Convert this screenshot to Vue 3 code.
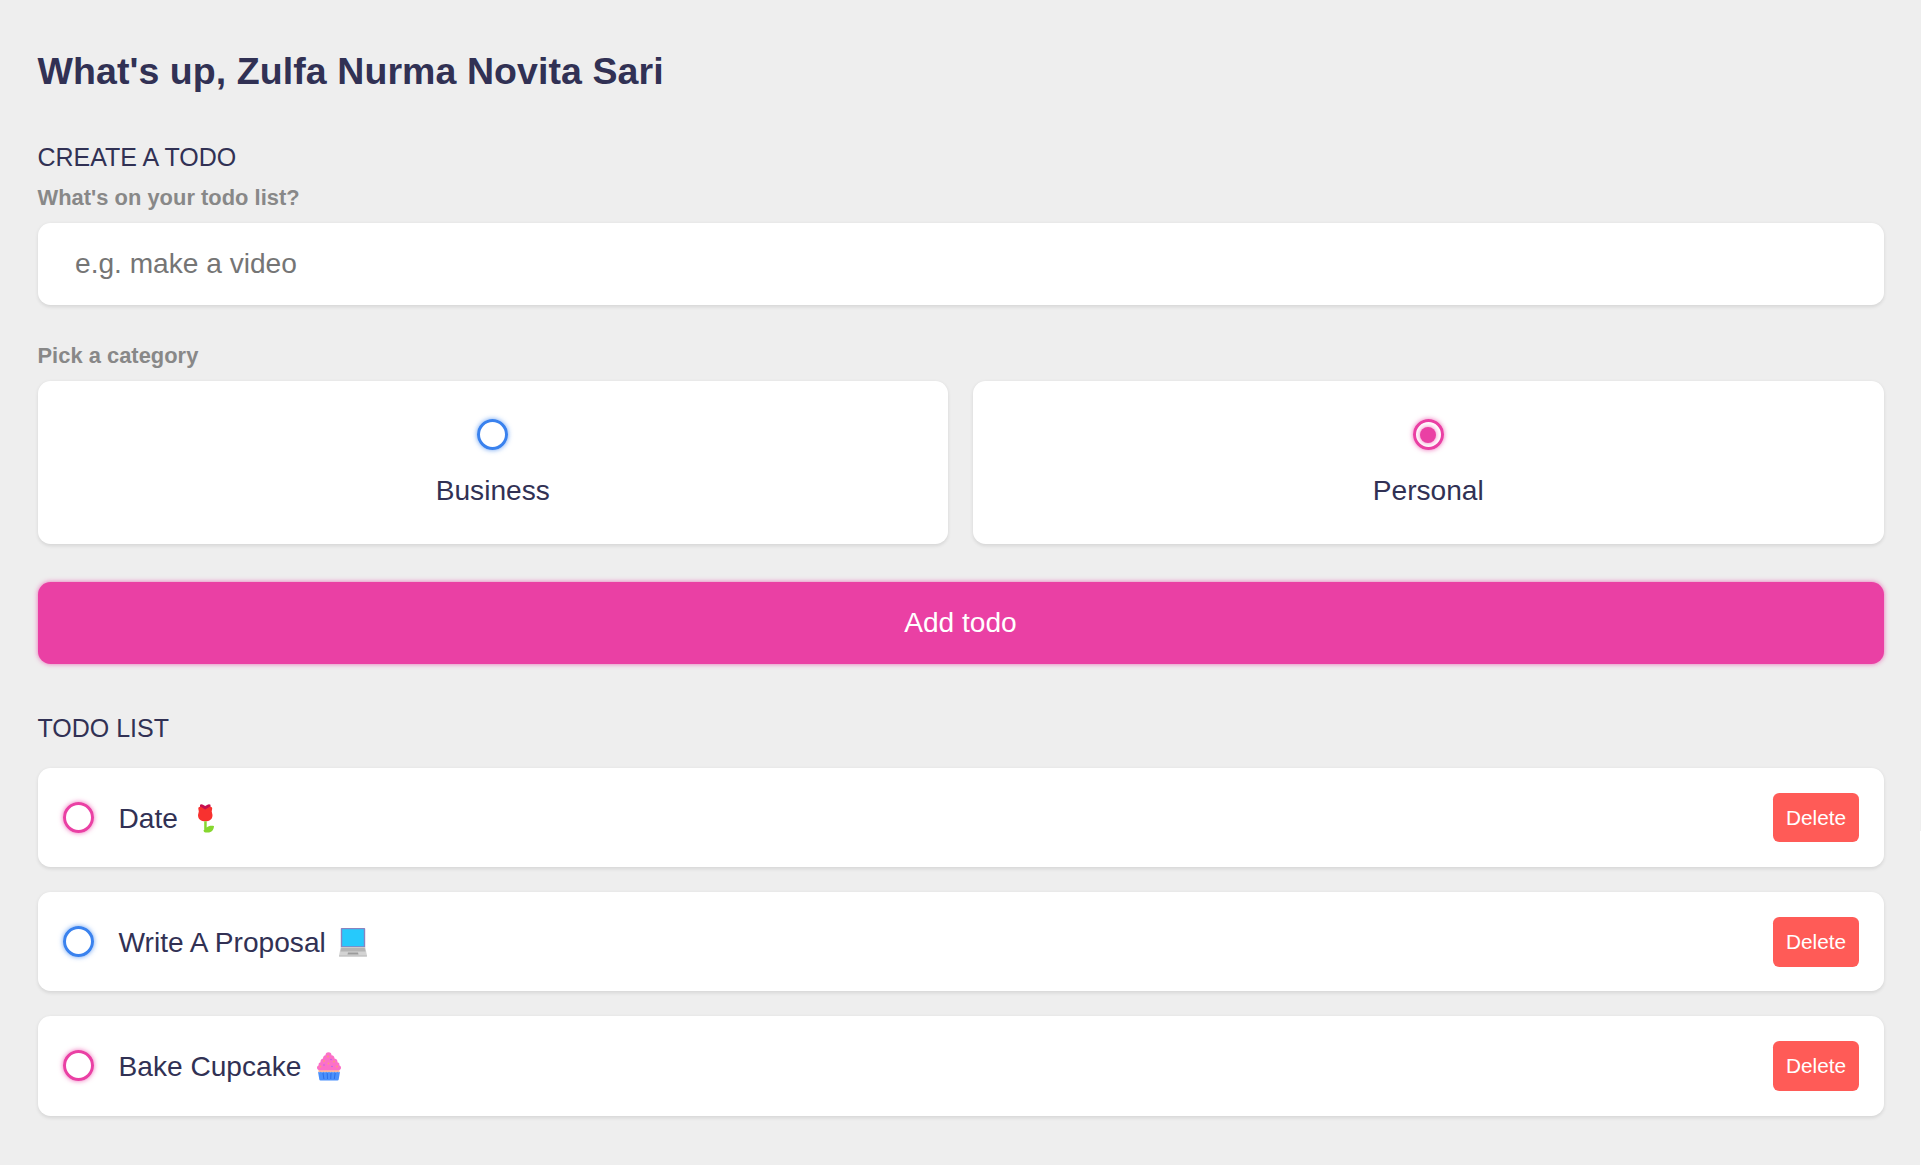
<script setup>
import { ref } from 'vue'

const name = ref('Zulfa Nurma Novita Sari')
const content = ref('')
const category = ref('personal')
const todos = ref([
  { id: 1, text: 'Date', icon: 'rose', category: 'personal' },
  { id: 2, text: 'Write A Proposal', icon: 'laptop', category: 'business' },
  { id: 3, text: 'Bake Cupcake', icon: 'cupcake', category: 'personal' },
])

function addTodo() {
  if (!content.value.trim()) return
  todos.value.push({ id: Date.now(), text: content.value, icon: '', category: category.value })
  content.value = ''
}

function removeTodo(id) {
  todos.value = todos.value.filter((t) => t.id !== id)
}
</script>

<template>
  <main class="app">
    <section class="greeting">
      <h2 class="title">What's up, <span>{{ name }}</span></h2>
    </section>

    <section class="create">
      <h3>CREATE A TODO</h3>
      <form @submit.prevent="addTodo">
        <h4>What's on your todo list?</h4>
        <input v-model="content" class="field" type="text" placeholder="e.g. make a video" />

        <h4>Pick a category</h4>
        <div class="options">
          <label class="option">
            <input v-model="category" type="radio" value="business" />
            <span class="bubble business"></span>
            <span>Business</span>
          </label>
          <label class="option">
            <input v-model="category" type="radio" value="personal" />
            <span class="bubble personal"></span>
            <span>Personal</span>
          </label>
        </div>

        <button class="submit" type="submit">Add todo</button>
      </form>
    </section>

    <section class="list-section">
      <h3>TODO LIST</h3>
      <div class="list">
        <div v-for="todo in todos" :key="todo.id" class="item">
          <span class="bubble" :class="todo.category"></span>
          <div class="content">
            <span>{{ todo.text }}</span>
            <svg v-if="todo.icon === 'rose'" class="icon rose" viewBox="0 0 16 29">
              <path d="M2 .8Q3.500-.3 5 .8L7.200 2 9.500.8Q11-.3 12.500.8V6H2Z" fill="#c50f4f" />
              <path d="M.3 4.500C.3 3 1.500 2.300 2.800 2.800L7.200 5.600 11.700 2.800C13 2.300 14.200 3 14.200 4.500L13.700 7.500 14.500 11C14.500 15.500 11.500 17.300 7.300 17.300S0 15.500 0 11L.8 7.500Z" fill="#f8312f" />
              <path d="M6.200 17.200h2.500v6.200C10.500 21.800 13 21.500 16 22c0 3.800-2.500 6.500-6 6.500H7.500c-1.300 0-2-1-1.900-2.500h.6Z" fill="#86d72f" />
            </svg>
            <svg v-else-if="todo.icon === 'laptop'" class="icon laptop" viewBox="0 0 28 29">
              <path d="M1.800 .8q0-.8.8-.8h22.800q.8 0 .8.800V19H1.800Z" fill="#8a83c0" />
              <path d="M3.200 1.200h21.600v17H3.200Z" fill="#26c9fc" />
              <path d="M1.800 19h24.400L27.900 27v1.500H.1V27Z" fill="#d3d3d3" />
              <path d="M2.300 19.800h23.400l.8 3.700H1.500Z" fill="#b4b4b4" />
              <path d="M.1 27.400h27.800v1.100H.1Z" fill="#bebebe" />
              <path d="M9 24.600h10l.5 1.800h-11Z" fill="#9b9b9b" />
            </svg>
            <svg v-else-if="todo.icon === 'cupcake'" class="icon cupcake" viewBox="0 0 24 29">
              <path d="M1.500 17h21v3.500h-21Z" fill="#ffb59b" />
              <path d="M1 19.800q1.400 1 2.800 0 1.300 1 2.700 0 1.400 1 2.800 0 1.300 1 2.700 0 1.400 1 2.800 0 1.300 1 2.700 0 1.400 1 2.800 0 1.300 1 2.700 0L21.700 27.500q-.2 1-1.200 1h-17q-1 0-1.200-1Z" fill="#4a90fb" />
              <path d="m6 21 .9 6M10.200 21l.3 6M14 21l-.3 6M18.200 21l-.9 6" stroke="#2d6ee8" stroke-width="1" />
              <path d="M11.500.2C13.500.2 14.500 1.500 14.500 3.200c2 .2 3 1.500 3 3.200 2.200.4 3.300 1.800 3 3.800 1.800.4 2.200 1.600 1.800 3 1.200.6 1.700 1.500 1.700 2.500 0 1.500-1 2.500-3 2.500H3c-2 0-3-1-3-2.500 0-1 .6-1.900 1.700-2.500-.4-1.400.2-2.600 1.800-3-.3-2 .8-3.400 2.500-3.800 0-1.700 1-3 2.500-3.200 0-1.700 1-3 3-3Z" fill="#fc70c8" />
              <g fill="#fc9a75">
                <circle cx="11" cy="4.500" r=".9" /><circle cx="7" cy="9" r=".9" />
                <circle cx="11.500" cy="11.500" r=".9" /><circle cx="17" cy="9.500" r=".9" />
                <circle cx="3.500" cy="14.500" r=".9" /><circle cx="20" cy="14.500" r=".9" />
              </g>
              <g fill="#b565e8">
                <circle cx="14" cy="7.500" r=".8" /><circle cx="7" cy="13" r=".8" />
                <circle cx="15" cy="14.500" r=".8" />
              </g>
            </svg>
          </div>
          <button class="delete" @click="removeTodo(todo.id)">Delete</button>
        </div>
      </div>
    </section>
  </main>
</template>

<style>
body {
  background: #eee;
}
</style>

<style scoped>
.app {
  --primary: #ea40a4;
  --business: #3a82ee;
  --dark: #313154;
  --shadow: 0 1.25px 3.75px rgba(0, 0, 0, 0.1);
  --business-glow: 0 0 5px rgba(58, 130, 238, 0.75);
  --personal-glow: 0 0 5px rgba(234, 64, 164, 0.75);
  position: relative;
  box-sizing: border-box;
  min-height: 1165px;
  padding: 50px 37.500px;
  background: #eee;
  color: var(--dark);
  font-family: 'Liberation Sans', Arial, sans-serif;
}
/* scroll track edge */
.app::after {
  content: '';
  position: absolute;
  top: 831px;
  right: 0;
  bottom: 0;
  width: 1px;
  background: #fff;
}
.app *,
.app *::before,
.app *::after {
  box-sizing: border-box;
}
h2,
h3,
h4 {
  margin: 0;
}
.title {
  font-size: 37.500px;
  line-height: 43px;
  letter-spacing: 0.075px;
}
.create {
  margin-top: 50px;
}
h3 {
  font-size: 25px;
  line-height: 29px;
  font-weight: 400;
}
h4 {
  margin: 13px 0;
  color: #888;
  font-size: 21.875px;
  line-height: 25px;
  letter-spacing: 0.03px;
}
.field,
.submit {
  display: block;
  width: 100%;
  height: 82px;
  border: 0;
  border-radius: 12.500px;
  font: 28.125px/32px 'Liberation Sans', Arial, sans-serif;
}
.field {
  margin-bottom: 38px;
  padding: 25px 37.500px;
  background: #fff;
  color: var(--dark);
  box-shadow: var(--shadow);
  outline: none;
}
.field::placeholder {
  color: #757575;
}
.options {
  display: grid;
  grid-template-columns: 1fr 1fr;
  gap: 25px;
  margin-bottom: 38px;
}
.option {
  display: flex;
  flex-direction: column;
  align-items: center;
  height: 163px;
  padding-top: 38px;
  border-radius: 12.500px;
  background: #fff;
  box-shadow: var(--shadow);
  font-size: 28.125px;
  line-height: 32px;
  cursor: pointer;
}
.option input {
  display: none;
}
.option .bubble {
  margin-bottom: 25px;
}
.bubble {
  display: flex;
  flex: none;
  align-items: center;
  justify-content: center;
  width: 31px;
  height: 31px;
  border: 3px solid var(--business);
  border-radius: 50%;
  box-shadow: var(--business-glow);
}
.bubble.personal {
  border-color: var(--primary);
  box-shadow: var(--personal-glow);
}
.bubble::after {
  content: '';
  width: 16px;
  height: 16px;
  border-radius: 50%;
  background: var(--business);
  opacity: 0;
}
.bubble.personal::after {
  background: var(--primary);
  box-shadow: var(--personal-glow);
}
input:checked + .bubble::after {
  opacity: 1;
}
.submit {
  background: var(--primary);
  color: #fff;
  box-shadow: var(--personal-glow);
  cursor: pointer;
}
.list-section {
  margin-top: 50px;
}
.list {
  display: flex;
  flex-direction: column;
  gap: 25px;
  margin-top: 25px;
}
.item {
  display: flex;
  align-items: center;
  height: 99.200px;
  padding: 0 25px;
  border-radius: 12.500px;
  background: #fff;
  box-shadow: var(--shadow);
}
.content {
  display: flex;
  flex: 1;
  align-items: center;
  margin-left: 25px;
  padding-top: 2px;
  font-size: 28.125px;
  line-height: 32px;
}
.icon {
  height: 29px;
}
.rose {
  width: 16px;
  margin-left: 20px;
}
.laptop {
  width: 28px;
  margin-left: 13px;
}
.cupcake {
  width: 24px;
  margin-left: 15.500px;
}
.delete {
  width: 86px;
  height: 49.500px;
  padding: 1px 0 0 1px;
  border: 0;
  border-radius: 6.250px;
  background: #ff5b57;
  color: #fff;
  font: 20.800px 'Liberation Sans', Arial, sans-serif;
  cursor: pointer;
}
</style>
